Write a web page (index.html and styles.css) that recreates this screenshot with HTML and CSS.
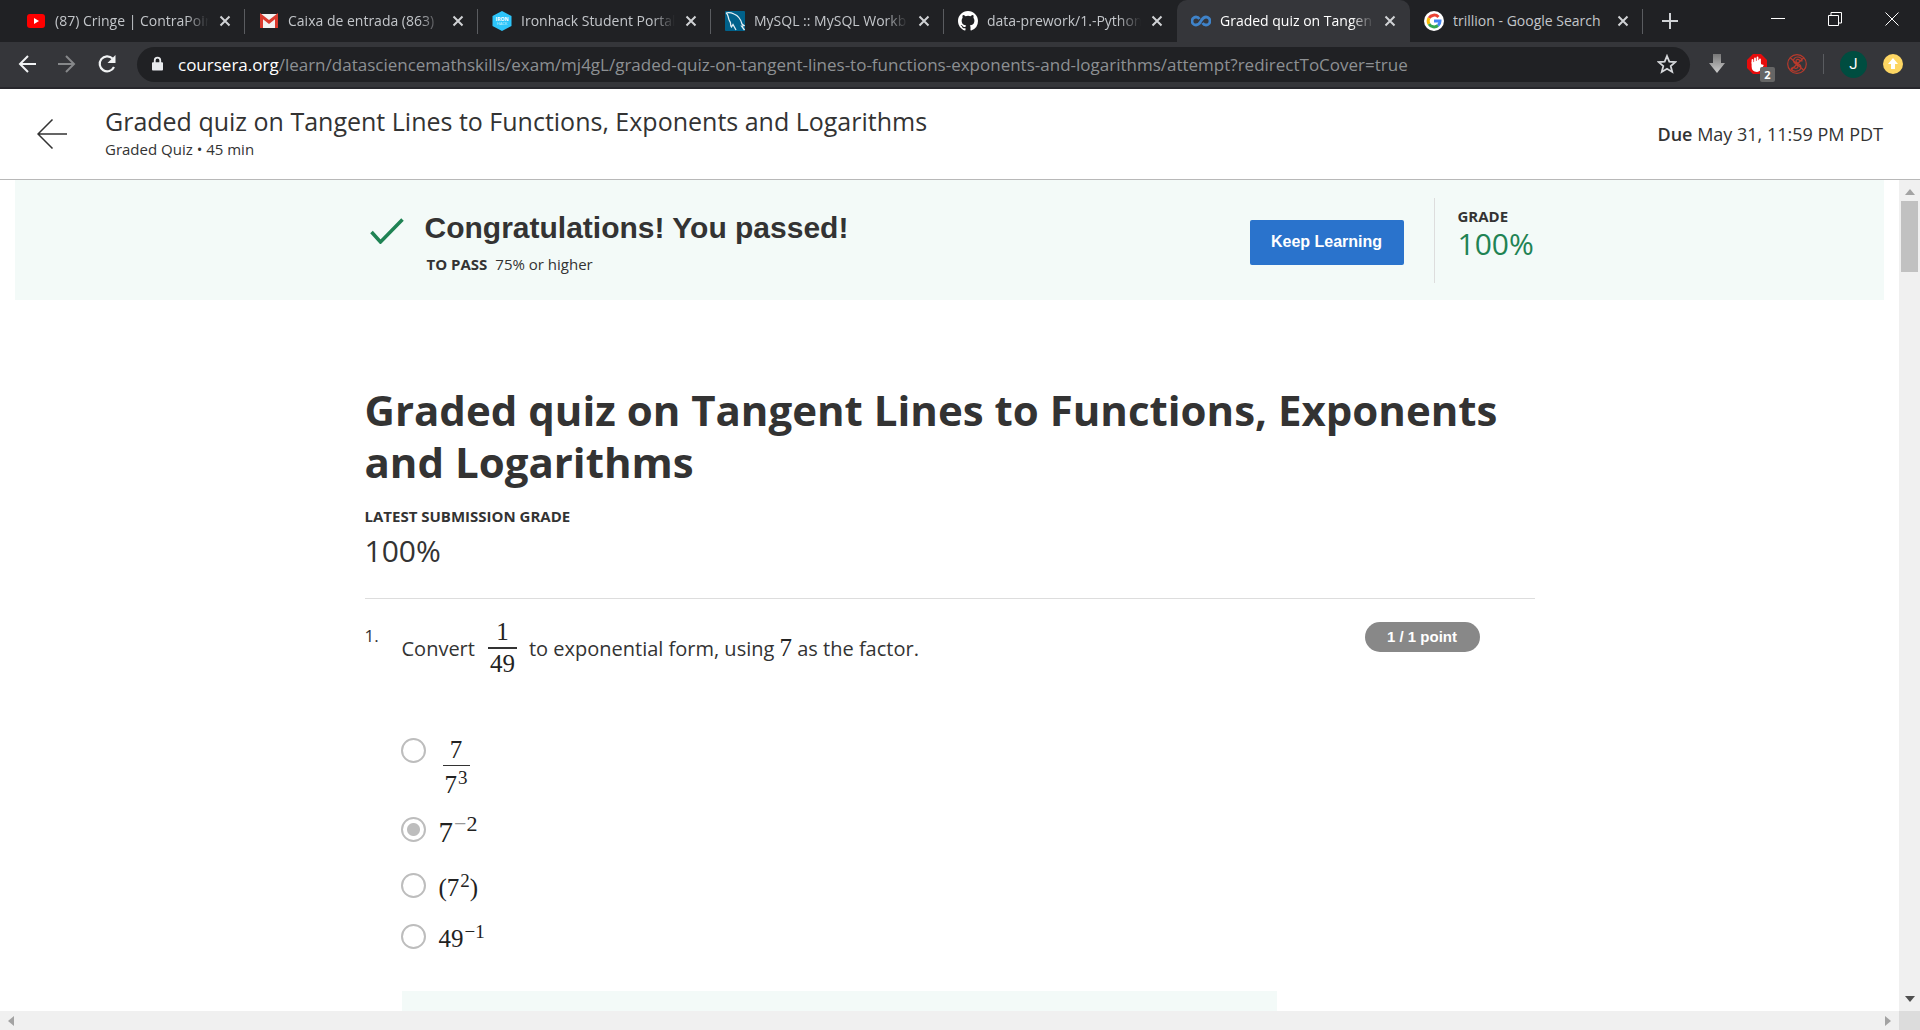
FILE: index.html
```html
<!DOCTYPE html>
<html lang="en">
<head>
<meta charset="utf-8">
<meta name="viewport" content="width=device-width, initial-scale=1">
<title>Graded quiz on Tangent Lines to Functions, Exponents and Logarithms</title>
<link rel="stylesheet" href="styles.css">
</head>
<body>
<svg class="defs" aria-hidden="true">
  <symbol id="x" viewBox="0 0 12 12"><path d="M1.5 1.5l9 9m0-9l-9 9" stroke="currentColor" stroke-width="2" fill="none"/></symbol>
</svg>

<nav class="tabstrip" aria-label="Tabs">
  <div class="tab">
    <svg class="favicon" viewBox="0 0 20 20"><rect x="1" y="3" width="18" height="14" rx="3" fill="#f00"/><path d="M8 7l5 3-5 3z" fill="#fff"/></svg>
    <span class="tab-title">(87) Cringe | ContraPoin</span>
    <button class="tab-close" aria-label="Close tab"><svg><use href="#x"/></svg></button>
  </div>
  <div class="tab">
    <svg class="favicon" viewBox="0 0 20 20"><rect x="1" y="3" width="18" height="14" rx="1" fill="#f2f2f2"/><path d="M2.500 17V5l7.500 6 7.500-6v12" fill="none" stroke="#d93a2e" stroke-width="3"/></svg>
    <span class="tab-title">Caixa de entrada (863)</span>
    <button class="tab-close" aria-label="Close tab"><svg><use href="#x"/></svg></button>
  </div>
  <div class="tab">
    <svg class="favicon" viewBox="0 0 20 20"><path d="M10 0l9.500 5v10L10 20 .5 15V5z" fill="#2dc5fa"/><text x="10" y="10" font-size="5" font-weight="700" text-anchor="middle" fill="#fff">IRON</text><text x="10" y="14" font-size="4" text-anchor="middle" fill="#d6f4ff">HACK</text></svg>
    <span class="tab-title">Ironhack Student Portal</span>
    <button class="tab-close" aria-label="Close tab"><svg><use href="#x"/></svg></button>
  </div>
  <div class="tab">
    <svg class="favicon" viewBox="0 0 20 20"><rect width="20" height="20" rx="1" fill="#00618a"/><path d="M1 2c3-1 6 0 8 1 5 2 7 6 8 10l2 1.500-2.500.5 3 4M1 2c2 1 2 3 2.500 5 .5 3 1.500 3 2 5 0 2 0 3 1 4l1.500-2.500L11 19" fill="none" stroke="#e4f0f5" stroke-width="1.300"/></svg>
    <span class="tab-title">MySQL :: MySQL Workb</span>
    <button class="tab-close" aria-label="Close tab"><svg><use href="#x"/></svg></button>
  </div>
  <div class="tab last-inactive">
    <svg class="favicon" viewBox="0 0 16 16"><path fill="#fff" d="M8 0C3.580 0 0 3.580 0 8c0 3.540 2.290 6.530 5.470 7.590.4.070.550-.170.550-.380 0-.190-.010-.820-.010-1.490-2.010.370-2.530-.490-2.690-.940-.090-.230-.480-.940-.820-1.130-.280-.150-.680-.520-.010-.530.630-.010 1.080.580 1.230.820.720 1.210 1.870.870 2.330.660.070-.520.280-.870.510-1.070-1.780-.2-3.640-.890-3.640-3.950 0-.870.310-1.590.820-2.150-.080-.2-.360-1.020.080-2.120 0 0 .670-.210 2.200.820a7.600 7.600 0 014 0c1.530-1.040 2.200-.820 2.200-.820.440 1.100.160 1.920.080 2.120.510.560.820 1.270.820 2.150 0 3.070-1.870 3.750-3.650 3.950.290.250.540.730.540 1.480 0 1.070-.010 1.930-.010 2.200 0 .210.150.460.550.380A8 8 0 0016 8c0-4.420-3.580-8-8-8z"/></svg>
    <span class="tab-title">data-prework/1.-Python</span>
    <button class="tab-close" aria-label="Close tab"><svg><use href="#x"/></svg></button>
  </div>
  <div class="tab active" aria-current="page">
    <svg class="favicon" viewBox="0 0 20 20"><path d="M8.500 8C7.500 6.500 6.500 6 5 6a4 4 0 000 8c3.500 0 4-2.500 5-4s2-4 5-4a4 4 0 010 8c-1.500 0-2.500-.5-3.500-2" fill="none" stroke="#3f83c9" stroke-width="2.800"/></svg>
    <span class="tab-title">Graded quiz on Tangen</span>
    <button class="tab-close" aria-label="Close tab"><svg><use href="#x"/></svg></button>
  </div>
  <div class="tab">
    <svg class="favicon" viewBox="0 0 20 20"><circle cx="10" cy="10" r="10" fill="#fff"/><g fill="none" stroke-width="3"><path d="M14.500 6A6 6 0 005 7" stroke="#ea4335"/><path d="M5 7a6 6 0 000 6" stroke="#fbbc05"/><path d="M5 13a6 6 0 009 1.500" stroke="#34a853"/><path d="M14 14.500c1.500-1.200 2-2.500 2-4.500h-6" stroke="#4285f4"/></g></svg>
    <span class="tab-title whole">trillion - Google Search</span>
    <button class="tab-close" aria-label="Close tab"><svg><use href="#x"/></svg></button>
  </div>
  <button class="new-tab" aria-label="New tab"><svg viewBox="0 0 16 16"><path d="M8 0v16M0 8h16" stroke="#d0d2d5" stroke-width="2"/></svg></button>
  <div class="window-buttons">
    <button aria-label="Minimize"><svg viewBox="0 0 14 14"><path d="M0 6.500h14" stroke="#fff"/></svg></button>
    <button aria-label="Restore"><svg viewBox="0 0 14 14"><path d="M.5 3.500h10v10H.5zM3 3V.5h10.500V11H11" fill="none" stroke="#fff"/></svg></button>
    <button aria-label="Close"><svg viewBox="0 0 14 14"><path d="M.5.5l13 13m0-13l-13 13" stroke="#fff"/></svg></button>
  </div>
</nav>

<div class="toolbar">
  <button aria-label="Back"><svg viewBox="0 0 20 20"><path d="M19 10H3m8-8l-8 8 8 8" fill="none" stroke="#f1f3f4" stroke-width="2"/></svg></button>
  <button aria-label="Forward"><svg viewBox="0 0 20 20"><path d="M1 10h16M9 2l8 8-8 8" fill="none" stroke="#86888a" stroke-width="2"/></svg></button>
  <button aria-label="Reload"><svg viewBox="0 0 20 20"><path d="M17 13a7.500 7.500 0 11-1.500-8.500" fill="none" stroke="#f1f3f4" stroke-width="2.200"/><path d="M18.500 1v8h-8z" fill="#f1f3f4"/></svg></button>
  <div class="omnibox">
    <svg class="lock" viewBox="0 0 12 16"><path d="M3 7V4a3 3 0 016 0v3" fill="none" stroke="#e8eaed" stroke-width="2"/><rect x="0" y="6" width="12" height="9" rx="1" fill="#e8eaed"/></svg>
    <div class="url" role="textbox" aria-label="Address"><b>coursera.org</b>/learn/datasciencemathskills/exam/mj4gL/graded-quiz-on-tangent-lines-to-functions-exponents-and-logarithms/attempt?redirectToCover=true</div>
    <button class="star" aria-label="Bookmark"><svg viewBox="0 0 20 20"><path d="M10 2l2.300 5.600 6 .5-4.600 3.900 1.500 5.900-5.200-3.200-5.200 3.200 1.500-5.900L1.700 8.100l6-.5z" fill="none" stroke="#d5d7da" stroke-width="1.800"/></svg></button>
  </div>
  <div class="extensions">
    <button aria-label="Downloads"><svg viewBox="0 0 20 20"><defs><linearGradient id="g" x2="0" y2="1"><stop stop-color="#777"/><stop offset="1" stop-color="#ccc"/></linearGradient></defs><path d="M6 0h8v9h4l-8 10L2 9h4z" fill="url(#g)"/></svg></button>
    <button class="blocker" aria-label="Ad blocker, 2 blocked"><svg viewBox="0 0 20 20"><path d="M6 0h8l6 6v8l-6 6H6l-6-6V6z" fill="#e60c0c"/><path d="M5.500 8.500v4c0 3 2 4.500 4.500 4.500 2 0 3.500-1.500 5.500-5.500l-1.500-.5-1 1.500V5.500M8 10V4.500M10.500 10V3.500" fill="#fff" stroke="#fff" stroke-width="1.800" stroke-linecap="round"/><path d="M5.500 9V6M6 10h7v4H6z" fill="#fff" stroke="#fff" stroke-width="1.800" stroke-linecap="round"/></svg><span class="badge">2</span></button>
    <button aria-label="Script blocker"><svg viewBox="0 0 20 20"><g fill="none" stroke="#b83a2c" stroke-width="1.200"><circle cx="10" cy="10" r="9.300"/><path d="M3 3.500l14 13M4 14.500c1 2.500 4 3 6 2.500 3-.5 5-3 3.500-5.500C12 9 9 9 9 7s3-2.500 4 0h2c0-3-2-4-4.500-4S6 5 6.500 7.500C7 10 11 10.500 11 12.500c0 2.500-4 2.500-4 .5l-3 1.500M3.500 16.500L17 3.500"/></g></svg></button>
    <span class="divider"></span>
    <button class="avatar" aria-label="Profile">J</button>
    <button aria-label="Update"><svg viewBox="0 0 20 20"><circle cx="10" cy="10" r="10" fill="#fdd663"/><path d="M10 4l5 6h-3v5H8v-5H5z" fill="#fff"/></svg></button>
  </div>
</div>

<header class="page-header">
  <a class="back" href="#" aria-label="Back"><svg viewBox="0 0 30 30"><path d="M30 15H1M15.500.5L1 15l14.500 14.500" fill="none" stroke="#333" stroke-width="1.500"/></svg></a>
  <div class="heading">
    <div class="quiz-name">Graded quiz on Tangent Lines to Functions, Exponents and Logarithms</div>
    <div class="quiz-kind">Graded Quiz • 45 min</div>
  </div>
  <div class="due"><b>Due</b> May 31, 11:59 PM PDT</div>
</header>

<div class="viewport">
  <main class="content">
    <section class="banner">
      <div class="column banner-row">
        <svg class="check" viewBox="0 0 34 26"><path d="M1.500 14l9 10L32.500 1.500" fill="none" stroke="#1f8354" stroke-width="3.500"/></svg>
        <div class="result">
          <h2>Congratulations! You passed!</h2>
          <p><b>TO PASS</b><span>75% or higher</span></p>
        </div>
        <button class="keep">Keep Learning</button>
        <div class="grade"><div class="label">GRADE</div><div class="score">100%</div></div>
      </div>
    </section>

    <div class="column quiz">
      <h1>Graded quiz on Tangent Lines to Functions, Exponents and Logarithms</h1>
      <div class="label">LATEST SUBMISSION GRADE</div>
      <div class="score">100%</div>

      <section class="question">
        <div class="number">1.</div>
        <div class="body">
          <p class="prompt" id="prompt"><span>Convert</span><span class="frac bold"><span>1</span><span>49</span></span><span>to exponential form, using <span class="math">7</span> as the factor.</span></p>
          <div class="options" role="radiogroup" aria-labelledby="prompt">
            <label class="option tall"><input type="radio" name="q1"><span class="frac"><span>7</span><span>7<sup>3</sup></span></span></label>
            <label class="option mid"><input type="radio" name="q1" checked><span class="math large">7<sup><i class="minus">−</i>2</sup></span></label>
            <label class="option"><input type="radio" name="q1"><span class="math">(7<sup>2</sup>)</span></label>
            <label class="option"><input type="radio" name="q1"><span class="math">49<sup>−1</sup></span></label>
          </div>
          <div class="feedback"></div>
        </div>
        <div class="points">1 / 1 point</div>
      </section>
    </div>
  </main>
  <div class="vbar" aria-hidden="true"><svg viewBox="0 0 10 6"><path d="M0 6l5-6 5 6z" fill="#a3a3a3"/></svg><div class="thumb"></div><svg viewBox="0 0 10 6"><path d="M0 0l5 6 5-6z" fill="#505050"/></svg></div>
  <div class="hbar" aria-hidden="true"><svg viewBox="0 0 6 10"><path d="M6 0L0 5l6 5z" fill="#a3a3a3"/></svg><svg viewBox="0 0 6 10"><path d="M0 0l6 5-6 5z" fill="#a3a3a3"/></svg></div>
  <div class="corner"></div>
</div>
</body>
</html>
```

FILE: styles.css
```css
* { box-sizing: border-box; }

body {
  margin: 0;
  height: 100vh;
  display: flex;
  flex-direction: column;
  overflow: hidden;
  background: #fff;
  color: #333;
  font-family: "Open Sans", "Noto Sans", sans-serif;
  font-size: 16px;
}

h1, h2, p { margin: 0; }

button {
  border: 0;
  padding: 0;
  background: none;
  color: inherit;
  font: inherit;
  display: flex;
  align-items: center;
  justify-content: center;
}

.defs { position: absolute; width: 0; height: 0; }

/* Browser tabs */
.tabstrip {
  display: flex;
  flex: none;
  height: 42px;
  padding-left: 12px;
  background: #202124;
  color: #c3c6ca;
}

.tab {
  flex: 0 1 233px;
  min-width: 0;
  display: flex;
  align-items: center;
  padding: 0 14px;
  position: relative;
}

.tab::after {
  content: "";
  position: absolute;
  right: 0;
  top: 9px;
  width: 1px;
  height: 25px;
  background: #5a5c60;
}

.tab.active::after, .tab.last-inactive::after { display: none; }

.tab.active {
  background: #35363a;
  border-radius: 10px 10px 0 0;
  color: #fff;
}

.favicon { flex: none; width: 20px; height: 20px; margin-right: 9px; }

.tab-title {
  flex: 1;
  min-width: 0;
  overflow: hidden;
  white-space: nowrap;
  font-size: 14px;
  line-height: 24px;
  -webkit-mask-image: linear-gradient(to right, #000 85%, transparent);
  mask-image: linear-gradient(to right, #000 85%, transparent);
}
.tab-title.whole { -webkit-mask-image: none; mask-image: none; }

.tab-close { margin-left: 10px; color: #d0d2d5; }
.tab-close svg { width: 12px; height: 12px; }

.new-tab { width: 54px; }
.new-tab svg { width: 16px; height: 16px; }

.window-buttons { display: flex; margin-left: auto; height: 38px; }
.window-buttons button { width: 57px; }
.window-buttons svg { width: 14px; height: 14px; }

/* Address bar */
.toolbar {
  flex: none;
  display: flex;
  align-items: center;
  height: 47px;
  padding: 0 17px 1px;
  background: #35363a;
  border-bottom: 2px solid #27272c;
}

.toolbar button svg { width: 20px; height: 20px; }
.toolbar > button { width: 20px; margin-right: 20px; }

.omnibox {
  flex: 1;
  min-width: 0;
  display: flex;
  align-items: center;
  height: 35px;
  margin-right: 17px;
  padding: 0 13px 0 15px;
  border-radius: 18px;
  background: #202124;
  color: #8d9093;
}

.lock { width: 11px; height: 16px; margin-right: 15px; }

.url {
  flex: 1;
  min-width: 0;
  overflow: hidden;
  white-space: nowrap;
  font-size: 17px;
}
.url b { font-weight: 400; color: #fff; }

.extensions { display: flex; align-items: center; gap: 20px; }
.blocker { position: relative; }
.badge {
  position: absolute;
  left: 13px;
  top: 13px;
  width: 15px;
  height: 15px;
  border-radius: 2px;
  background: #666;
  color: #fff;
  font-size: 11px;
  line-height: 15px;
  font-weight: 700;
}
.divider { width: 1px; height: 20px; margin: 0 -4px; background: #5a5c60; }
.avatar {
  width: 27px;
  height: 27px;
  margin-right: -4px;
  border-radius: 50%;
  background: #004d40;
  color: #fff;
  font-family: Roboto, sans-serif;
  font-size: 15px;
}

/* Quiz header */
.page-header {
  flex: none;
  display: flex;
  align-items: center;
  height: 91px;
  padding: 0 37px;
  border-bottom: 1px solid #b8b8b8;
}
.back { display: flex; margin-right: 38px; }
.back svg { width: 30px; height: 30px; }
.heading { flex: 1; }
.quiz-name { font-size: 25px; line-height: 30px; }
.quiz-kind { font-size: 15px; line-height: 26px; }
.due { font-size: 18px; }
.due b { font-weight: 600; }

/* Scrolling area with its bars */
.viewport {
  flex: 1;
  min-height: 0;
  display: grid;
  grid-template-columns: 1fr 21px;
  grid-template-rows: 1fr 19px;
}
.content { overflow: hidden; padding: 0 15px; }
.vbar {
  display: flex;
  flex-direction: column;
  align-items: center;
  padding: 9px 0;
  background: #f0f0f0;
}
.vbar svg { width: 10px; height: 6px; }
.thumb { width: 17px; height: 71px; margin: 6px 0 auto; background: #c1c1c1; }
.hbar {
  display: flex;
  justify-content: space-between;
  align-items: center;
  padding: 0 8px;
  background: #f0f0f0;
}
.hbar svg { width: 6px; height: 10px; }
.corner { background: #dcdcdc; }

.column { width: 100%; max-width: 1170px; margin: 0 auto; }

.label { font-size: 15px; line-height: 20px; font-weight: 700; }
.score { font-size: 30px; line-height: 36px; }

/* Result banner */
.banner { background: #f3faf8; }
.banner-row { display: flex; align-items: center; height: 120px; padding: 4px 0 0 5px; }
.check { flex: none; width: 34px; height: 26px; margin-right: 21px; margin-bottom: 22px; }
.result { flex: 1; }
.result h2 {
  font: 700 30px/40px "Liberation Sans", Arial, sans-serif;
}
.result p { display: flex; gap: 8px; padding: 4px 0 0 2px; font-size: 15px; line-height: 24px; }
.result b { font-weight: 700; }
.keep {
  width: 154px;
  height: 45px;
  border-radius: 2px;
  background: #2a73cc;
  color: #fff;
  font: 700 16px/24px "Liberation Sans", Arial, sans-serif;
}
.grade {
  width: 101px;
  height: 85px;
  margin: 0 0 4px 30px;
  padding: 8px 0 0 23px;
  border-left: 1px solid #ddd;
}
.grade .score { color: #1f8354; }

/* Quiz body */
.quiz { padding-top: 84px; }
.quiz h1 { margin-bottom: 18px; font-size: 42px; line-height: 52px; font-weight: 700; }
.quiz > .score { margin-top: 7px; padding-bottom: 29px; border-bottom: 1px solid #ddd; }

.question { display: flex; align-items: flex-start; padding-top: 23px; }
.number { width: 37px; font-size: 17px; line-height: 28px; }
.body { width: 875px; }
.prompt { display: flex; align-items: center; height: 52px; font-size: 20px; }

.math, .frac { font-family: "Liberation Serif", "Times New Roman", serif; font-size: 25px; color: #222; }
.math.large { font-size: 29px; }
.math sup, .frac sup { margin-left: 1px; font-size: 19px; line-height: 0; }
.math.large sup { font-size: 22px; }
.minus { font-style: normal; color: #999; }

.frac { display: inline-flex; flex-direction: column; text-align: center; line-height: 30px; }
.frac > :last-child { border-top: 1px solid #333; padding: 0 2px; }
.prompt .frac { margin: 0 12px 0 13px; }
.bold > :last-child { border-top-width: 2px; }

.options { display: flex; flex-direction: column; padding-top: 64px; }
.option { display: flex; align-items: flex-start; height: 51px; }
.option.tall { height: 79px; }
.option.mid { height: 56px; }
.option .math { line-height: 30px; }
.option .frac { margin-left: 4px; margin-top: -3px; }
.option .frac > :last-child { line-height: 38px; }
.option input {
  appearance: none;
  flex: none;
  width: 25px;
  height: 25px;
  margin: 0 13px 0 -1px;
  border: 2px solid #bdbdbd;
  border-radius: 50%;
}
.option input:checked { background: radial-gradient(circle, #bdbdbd 6px, transparent 7px); }

.feedback { height: 120px; margin-top: 16px; background: #f3faf8; }

.points {
  width: 115px;
  margin-left: 88px;
  border-radius: 15px;
  background: #888;
  color: #fff;
  text-align: center;
  font: 700 15px/30px "Liberation Sans", Arial, sans-serif;
}
```
